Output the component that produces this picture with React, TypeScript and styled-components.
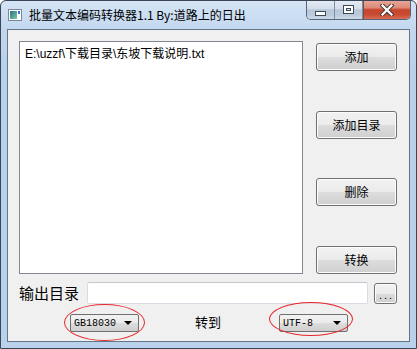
import React from "react";
import styled, { createGlobalStyle } from "styled-components";

const GlobalStyle = createGlobalStyle`
  html, body { margin: 0; padding: 0; background: #ffffff; }
  body { font-family: "Liberation Sans", "Noto Sans CJK SC", sans-serif; }
  * { box-sizing: border-box; }
`;

const Window = styled.div`
  width: 417px;
  height: 349px;
  border: 1px solid #3a4656;
  border-radius: 6px 6px 0 0;
  background: linear-gradient(#d4e4f6 0px, #c3d8ef 28px, #b9d1ea 60px, #b9d1ea 100%);
  display: flex;
  flex-direction: column;
  overflow: hidden;
`;

const TitleBar = styled.div`
  height: 28px;
  display: flex;
  align-items: center;
  padding-left: 7px;
  flex: none;
`;

const AppIcon = styled.svg`
  width: 14px;
  height: 14px;
  flex: none;
`;

const Title = styled.span`
  margin-left: 7px;
  font-family: "Noto Sans CJK SC", sans-serif;
  font-size: 12px;
  line-height: 16px;
  color: #000;
  white-space: nowrap;
`;

const Controls = styled.div`
  margin-left: auto;
  margin-right: 5px;
  align-self: flex-start;
  margin-top: -1px;
  display: flex;
  height: 20px;
  border: 1px solid #56657a;
  border-top: none;
  border-radius: 0 0 5px 5px;
  overflow: hidden;
`;

const CtrlButton = styled.div<{ $w: number; $close?: boolean }>`
  width: ${(p) => p.$w}px;
  height: 100%;
  display: flex;
  align-items: center;
  justify-content: center;
  border-left: ${(p) => (p.$close ? "1px solid #7a4a44" : "0")};
  border-right: ${(p) => (p.$close ? "0" : "1px solid #7d8ea3")};
  background: ${(p) =>
    p.$close
      ? "linear-gradient(#e9a99b 0%, #de8a78 40%, #c9452d 52%, #c84a32 75%, #d96c52 100%)"
      : "linear-gradient(#e6edf5 0%, #d3deea 45%, #b7c7da 52%, #bccbdc 80%, #cfdbe8 100%)"};
`;

const MinGlyph = styled.div`
  width: 11px;
  height: 5px;
  margin-top: 7px;
  background: #ffffff;
  border: 1px solid #3f4a58;
`;

const MaxGlyph = styled.div`
  width: 11px;
  height: 9px;
  border: 1px solid #3f4a58;
  background: #ffffff;
  padding: 2px 2px 2px 2px;
  display: flex;
  & > span {
    flex: 1;
    border: 1px solid #3f4a58;
    background: #dce4ee;
  }
`;

const Frame = styled.div`
  flex: 1;
  padding: 0 6px 6px 6px;
  display: flex;
`;

const Client = styled.div`
  position: relative;
  flex: 1;
  border: 1px solid #65768a;
  background: #f0f0f0;
  padding: 11px 12px 0 11px;
  display: flex;
  flex-direction: column;
`;

const MainRow = styled.div`
  display: flex;
  gap: 13px;
  height: 233px;
`;

const FileList = styled.div`
  width: 284px;
  height: 100%;
  background: #ffffff;
  border: 1px solid #828790;
  padding: 4px 5px;
`;

const FileItem = styled.div`
  font-family: "Liberation Sans", "Noto Sans CJK SC", sans-serif;
  font-size: 12px;
  line-height: 16px;
  color: #000;
  white-space: nowrap;
`;

const ButtonColumn = styled.div`
  width: 81px;
  display: flex;
  flex-direction: column;
  justify-content: space-between;
  padding-top: 2px;
`;

const PushButton = styled.div`
  height: 28px;
  border: 1px solid #707070;
  border-radius: 3px;
  background: linear-gradient(#f2f2f2 0%, #ebebeb 50%, #dddddd 51%, #cfcfcf 100%);
  box-shadow: inset 0 0 0 1px #fcfcfc;
  display: flex;
  align-items: center;
  justify-content: center;
  font-family: "Noto Sans CJK SC", sans-serif;
  font-size: 12px;
  line-height: 16px;
  color: #000;
`;

const OutputRow = styled.div`
  margin-top: 8px;
  display: grid;
  grid-template-columns: 62px 281px 23px;
  column-gap: 6px;
  align-items: center;
`;

const OutputLabel = styled.span`
  font-family: "Noto Sans CJK SC", sans-serif;
  font-size: 15px;
  line-height: 18px;
  color: #000;
  white-space: nowrap;
  margin-top: -1px;
`;

const PathInput = styled.div`
  height: 22px;
  background: #ffffff;
  border: 1px solid #d9dde3;
  border-top-color: #c4c8ce;
  border-radius: 2px;
`;

const BrowseButton = styled(PushButton)`
  height: 21px;
  margin-top: 1px;
  font-family: "Liberation Sans", sans-serif;
  font-size: 11px;
  letter-spacing: 2px;
  padding-left: 2px;
  padding-top: 2px;
`;

const EncodingRow = styled.div`
  margin-top: 10px;
  margin-left: 51px;
  display: grid;
  grid-template-columns: 69px 28px 69px;
  column-gap: 56px;
  align-items: center;
`;

const Combo = styled.div`
  height: 18px;
  border: 1px solid #707070;
  border-radius: 2px;
  background: linear-gradient(#f2f2f2 0%, #ebebeb 50%, #dddddd 51%, #cfcfcf 100%);
  display: flex;
  align-items: center;
  padding: 0 6px 0 3px;
  font-family: "Liberation Mono", monospace;
  font-size: 10px;
  color: #000;
`;

const ComboArrow = styled.span`
  margin-left: auto;
  width: 0;
  height: 0;
  border-left: 4px solid transparent;
  border-right: 4px solid transparent;
  border-top: 4px solid #000;
`;

const ToLabel = styled.span`
  font-family: "Noto Sans CJK SC", sans-serif;
  font-size: 13px;
  line-height: 16px;
  color: #000;
  white-space: nowrap;
  margin-top: -3px;
`;

const Annotation = styled.div`
  position: absolute;
  border: 1px solid #e8262a;
  border-radius: 50%;
  pointer-events: none;
`;

export default function App() {
  return (
    <>
      <GlobalStyle />
      <Window>
        <TitleBar>
          <AppIcon viewBox="0 0 14 14">
            <defs>
              <linearGradient id="ig" x1="0" y1="0" x2="1" y2="1">
                <stop offset="0" stopColor="#2c6f86" />
                <stop offset="1" stopColor="#7cc9a2" />
              </linearGradient>
            </defs>
            <rect x="0.5" y="1.5" width="13" height="11" fill="#ffffff" stroke="#7c8896" />
            <rect x="2" y="3" width="7" height="8" fill="url(#ig)" />
            <rect x="10" y="3" width="2" height="3" fill="#3a6fd8" />
          </AppIcon>
          <Title>批量文本编码转换器1.1 By:道路上的日出</Title>
          <Controls>
            <CtrlButton $w={28}>
              <MinGlyph />
            </CtrlButton>
            <CtrlButton $w={28}>
              <MaxGlyph>
                <span />
              </MaxGlyph>
            </CtrlButton>
            <CtrlButton $w={47} $close>
              <svg width="14" height="12" viewBox="0 0 14 12">
                <path d="M2.5 1.5 L11.5 10.5 M11.5 1.5 L2.5 10.5" stroke="#4a3a38" strokeWidth="4.2" strokeLinecap="square" />
                <path d="M2.5 1.5 L11.5 10.5 M11.5 1.5 L2.5 10.5" stroke="#ffffff" strokeWidth="2.2" strokeLinecap="square" />
              </svg>
            </CtrlButton>
          </Controls>
        </TitleBar>
        <Frame>
          <Client>
            <MainRow>
              <FileList>
                <FileItem>E:\uzzf\下载目录\东坡下载说明.txt</FileItem>
              </FileList>
              <ButtonColumn>
                <PushButton>添加</PushButton>
                <PushButton>添加目录</PushButton>
                <PushButton>删除</PushButton>
                <PushButton>转换</PushButton>
              </ButtonColumn>
            </MainRow>
            <OutputRow>
              <OutputLabel>输出目录</OutputLabel>
              <PathInput />
              <BrowseButton>...</BrowseButton>
            </OutputRow>
            <EncodingRow>
              <Combo>
                GB18030
                <ComboArrow />
              </Combo>
              <ToLabel>转到</ToLabel>
              <Combo>
                UTF-8
                <ComboArrow />
              </Combo>
            </EncodingRow>
            <Annotation style={{ left: 56, top: 274, width: 81, height: 37 }} />
            <Annotation style={{ left: 261, top: 272, width: 84, height: 34 }} />
          </Client>
        </Frame>
      </Window>
    </>
  );
}
